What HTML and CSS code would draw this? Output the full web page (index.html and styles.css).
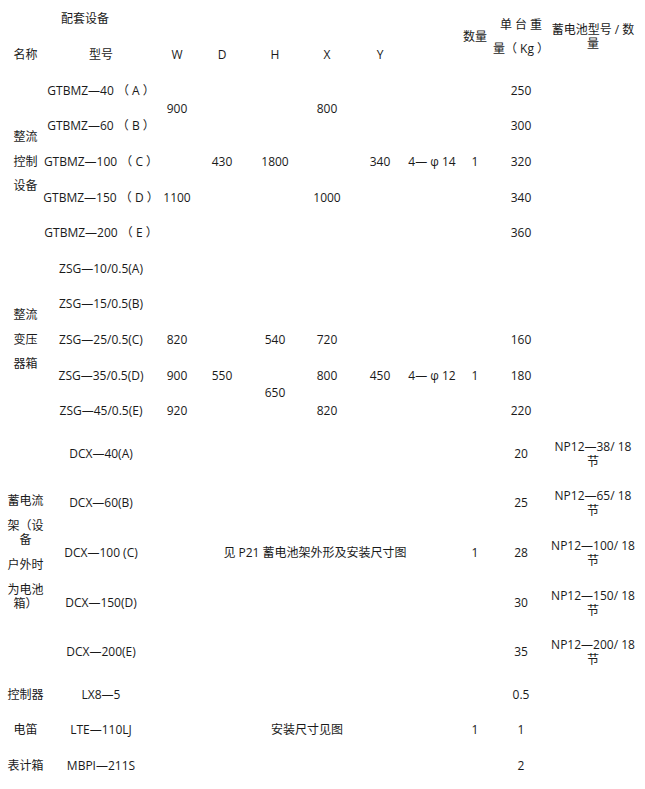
FILE: index.html
```html
<!DOCTYPE html>
<html lang="zh-CN">
<head>
<meta charset="utf-8">
<title>配套设备</title>
<link rel="stylesheet" href="styles.css">
</head>
<body>
<div class="sheet">
  <!-- header -->
  <div class="cell r1 c2 lead">配套设备</div>
  <div class="cell r1 c9 rs2">数量</div>
  <div class="cell r1 c10 rs2 tall">单 台 重<br>量（ Kg ）</div>
  <div class="cell r1 c11 rs2">蓄电池型号 / 数<br>量</div>
  <div class="cell r2 c1">名称</div>
  <div class="cell r2 c2">型号</div>
  <div class="cell r2 c3">W</div>
  <div class="cell r2 c4">D</div>
  <div class="cell r2 c5">H</div>
  <div class="cell r2 c6">X</div>
  <div class="cell r2 c7">Y</div>

  <!-- 整流控制设备 -->
  <div class="cell r3 c1 rs5 label"><p>整流</p><p>控制</p><p>设备</p></div>
  <div class="cell r3 c2">GTBMZ—40 （ A ）</div>
  <div class="cell r3 c3 rs2">900</div>
  <div class="cell r3 c6 rs2">800</div>
  <div class="cell r3 c4 rs5">430</div>
  <div class="cell r3 c5 rs5">1800</div>
  <div class="cell r3 c7 rs5">340</div>
  <div class="cell r3 c8 rs5">4— φ 14</div>
  <div class="cell r3 c9 rs5">1</div>
  <div class="cell r3 c10">250</div>
  <div class="cell r4 c2">GTBMZ—60 （ B ）</div>
  <div class="cell r4 c10">300</div>
  <div class="cell r5 c2">GTBMZ—100 （ C ）</div>
  <div class="cell r5 c3 rs3">1100</div>
  <div class="cell r5 c6 rs3">1000</div>
  <div class="cell r5 c10">320</div>
  <div class="cell r6 c2">GTBMZ—150 （ D ）</div>
  <div class="cell r6 c10">340</div>
  <div class="cell r7 c2">GTBMZ—200 （ E ）</div>
  <div class="cell r7 c10">360</div>

  <!-- 整流变压器箱 -->
  <div class="cell r8 c1 rs5 label"><p>整流</p><p>变压</p><p>器箱</p></div>
  <div class="cell r8 c2">ZSG—10/0.5(A)</div>
  <div class="cell r9 c2">ZSG—15/0.5(B)</div>
  <div class="cell r10 c2">ZSG—25/0.5(C)</div>
  <div class="cell r10 c3">820</div>
  <div class="cell r10 c4 rs3">550</div>
  <div class="cell r10 c5">540</div>
  <div class="cell r10 c6">720</div>
  <div class="cell r10 c7 rs3">450</div>
  <div class="cell r10 c8 rs3">4— φ 12</div>
  <div class="cell r10 c9 rs3">1</div>
  <div class="cell r10 c10">160</div>
  <div class="cell r11 c2">ZSG—35/0.5(D)</div>
  <div class="cell r11 c3">900</div>
  <div class="cell r11 c5 rs2">650</div>
  <div class="cell r11 c6">800</div>
  <div class="cell r11 c10">180</div>
  <div class="cell r12 c2">ZSG—45/0.5(E)</div>
  <div class="cell r12 c3">920</div>
  <div class="cell r12 c6">820</div>
  <div class="cell r12 c10">220</div>

  <!-- 蓄电池架 -->
  <div class="cell r13 c1 rs5 label wide"><p>蓄电流</p><p>架（设<br>备</p><p>户外时</p><p>为电池<br>箱）</p></div>
  <div class="cell r13 c2">DCX—40(A)</div>
  <div class="cell r13 c3 cs6 rs5 note">见 P21 蓄电池架外形及安装尺寸图</div>
  <div class="cell r13 c9 rs5">1</div>
  <div class="cell r13 c10">20</div>
  <div class="cell r13 c11 two">NP12—38/ 18<br>节</div>
  <div class="cell r14 c2">DCX—60(B)</div>
  <div class="cell r14 c10">25</div>
  <div class="cell r14 c11 two">NP12—65/ 18<br>节</div>
  <div class="cell r15 c2">DCX—100 (C)</div>
  <div class="cell r15 c10">28</div>
  <div class="cell r15 c11 two">NP12—100/ 18<br>节</div>
  <div class="cell r16 c2">DCX—150(D)</div>
  <div class="cell r16 c10">30</div>
  <div class="cell r16 c11 two">NP12—150/ 18<br>节</div>
  <div class="cell r17 c2">DCX—200(E)</div>
  <div class="cell r17 c10">35</div>
  <div class="cell r17 c11 two">NP12—200/ 18<br>节</div>

  <!-- 其他 -->
  <div class="cell r18 c1">控制器</div>
  <div class="cell r18 c2">LX8—5</div>
  <div class="cell r18 c10">0.5</div>
  <div class="cell r18 c3 cs6 rs3 note2">安装尺寸见图</div>
  <div class="cell r18 c9 rs3">1</div>
  <div class="cell r19 c1">电笛</div>
  <div class="cell r19 c2">LTE—110LJ</div>
  <div class="cell r19 c10">1</div>
  <div class="cell r20 c1">表计箱</div>
  <div class="cell r20 c2">MBPI—211S</div>
  <div class="cell r20 c10">2</div>
</div>
</body>
</html>
```

FILE: styles.css
```css
html, body {
  margin: 0;
  padding: 0;
  background: #ffffff;
}

body {
  font-family: "Open Sans", "Noto Sans CJK SC", sans-serif;
  font-size: 12px;
  color: #1a1a1a;
}

.sheet {
  display: grid;
  grid-template-columns: 51px 100px 52px 38px 68px 36px 70px 34px 52px 40px 104px;
  grid-template-rows: 36px 36px repeat(10, 35.6px) repeat(5, 49.6px) repeat(3, 35.6px);
  padding-top: 1px;
  width: 645px;
}

.cell {
  align-self: center;
  justify-self: center;
  white-space: nowrap;
  text-align: center;
  line-height: 14px;
}

.lead {
  justify-self: start;
  margin-left: 10px;
}

.tall {
  line-height: 24px;
}

.two {
  line-height: 15px;
}

.label {
  display: flex;
  flex-direction: column;
  align-items: center;
  gap: 10.5px;
}

.label.wide {
  gap: 11px;
}

.label p {
  margin: 0;
}

.note {
  margin-left: 30px;
}

.note2 {
  margin-left: 14px;
}

/* rows */
.r1 { grid-row-start: 1; }
.r2 { grid-row-start: 2; }
.r3 { grid-row-start: 3; }
.r4 { grid-row-start: 4; }
.r5 { grid-row-start: 5; }
.r6 { grid-row-start: 6; }
.r7 { grid-row-start: 7; }
.r8 { grid-row-start: 8; }
.r9 { grid-row-start: 9; }
.r10 { grid-row-start: 10; }
.r11 { grid-row-start: 11; }
.r12 { grid-row-start: 12; }
.r13 { grid-row-start: 13; }
.r14 { grid-row-start: 14; }
.r15 { grid-row-start: 15; }
.r16 { grid-row-start: 16; }
.r17 { grid-row-start: 17; }
.r18 { grid-row-start: 18; }
.r19 { grid-row-start: 19; }
.r20 { grid-row-start: 20; }

.rs2 { grid-row-end: span 2; }
.rs3 { grid-row-end: span 3; }
.rs5 { grid-row-end: span 5; }

/* columns */
.c1 { grid-column-start: 1; }
.c2 { grid-column-start: 2; }
.c3 { grid-column-start: 3; }
.c4 { grid-column-start: 4; }
.c5 { grid-column-start: 5; }
.c6 { grid-column-start: 6; }
.c7 { grid-column-start: 7; }
.c8 { grid-column-start: 8; }
.c9 { grid-column-start: 9; }
.c10 { grid-column-start: 10; }
.c11 { grid-column-start: 11; }

.cs6 { grid-column-end: span 6; }
```
